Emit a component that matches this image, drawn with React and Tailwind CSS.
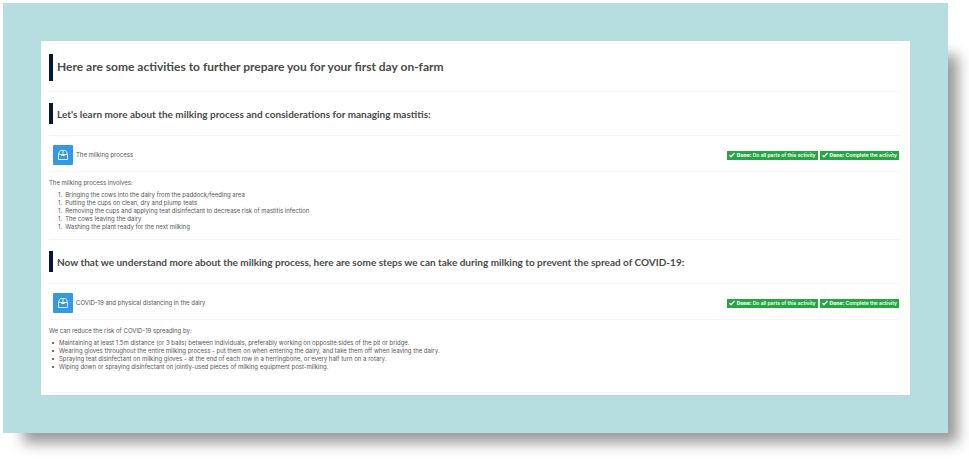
import React from "react";

function PackageIcon() {
  return (
    <span className="flex size-5 shrink-0 items-center justify-center rounded-[1px] bg-[#3498e3]">
      <svg viewBox="0 0 12 10" className="h-[10px] w-[12px]" fill="none" stroke="#d9f1ff" strokeWidth="1" strokeLinejoin="round" aria-hidden="true">
        <path d="M1.500 4.500h9v5h-9zM1.500 4.500 2.500 1.500Q3 .5 4 .5h4q1 0 1.500 1l1 3M6 .5v4M4.500 4.500v1h3v-1" />
      </svg>
    </span>
  );
}

function Badge({ children }) {
  return (
    <span className="flex h-[9px] items-center gap-[2px] bg-[#24a642] px-[2px] text-[5px] leading-[9px] font-semibold whitespace-nowrap text-white">
      <svg viewBox="0 0 12 12" className="size-[6px]" fill="none" stroke="currentColor" strokeWidth="2.5" aria-hidden="true">
        <path d="m1 6.5 3 3L11 2" />
      </svg>
      <span>
        <strong className="font-extrabold">Done:</strong> {children}
      </span>
    </span>
  );
}

function Activity({ title }) {
  return (
    <div className="flex h-9 items-center justify-between border-b border-[#f4f4f4] pt-[2px] pl-1">
      <a href="#" className="flex items-center gap-[3px]">
        <PackageIcon />
        <span>{title}</span>
      </a>
      <div className="flex gap-[2px] pt-[1px]">
        <Badge>Do all parts of this activity</Badge>
        <Badge>Complete the activity</Badge>
      </div>
    </div>
  );
}

function SectionHeading({ children }) {
  return (
    <div className="border-b border-[#f4f4f4] py-[11px]">
      <h2 className="flex h-[21px] items-center border-l-4 border-[#06183a] pl-1 font-['Lato',sans-serif] text-[10px] font-bold text-[#4a4a4a]">
        {children}
      </h2>
    </div>
  );
}

const milkingSteps = [
  "Bringing the cows into the dairy from the paddock/feeding area",
  "Putting the cups on clean, dry and plump teats",
  "Removing the cups and applying teat disinfectant to decrease risk of mastitis infection",
  "The cows leaving the dairy",
  "Washing the plant ready for the next milking",
];

const covidSteps = [
  "Maintaining at least 1.5m distance (or 3 bails) between individuals, preferably working on opposite sides of the pit or bridge.",
  "Wearing gloves throughout the entire milking process - put them on when entering the dairy, and take them off when leaving the dairy.",
  "Spraying teat disinfectant on milking gloves - at the end of each row in a herringbone, or every half turn on a rotary.",
  "Wiping down or spraying disinfectant on jointly-used pieces of milking equipment post-milking.",
];

export default function App() {
  return (
    <div className="min-h-screen overflow-hidden bg-white pt-[3px] pr-[21px] pb-7 pl-[3px] font-['Inter',sans-serif] text-[6px] leading-[8px] text-[#555]">
      <div className="relative isolate">
        <div className="absolute -right-[10px] -bottom-[10px] top-[52px] left-5 -z-10 bg-[#999] blur-[7px]" />
        <main className="bg-[#b6dde0] px-[38px] py-[38px]">
          <div className="bg-white px-2 pt-[2px] pb-[2px]">
            <div className="mr-[3px] border-y border-[#f4f4f4]">
              <div className="border-b border-[#f4f4f4] py-[10px]">
                <h1 className="flex h-[27px] items-center border-l-4 border-[#06183a] pb-[2px] pl-1 font-['Lato',sans-serif] text-[12px] font-bold text-[#4a4a4a]">
                  Here are some activities to further prepare you for your first day on-farm
                </h1>
              </div>

              <section className="border-b border-[#f4f4f4] pb-[8px]">
                <SectionHeading>
                  Let's learn more about the milking process and considerations for managing mastitis:
                </SectionHeading>
                <Activity title="The milking process" />
                <p className="pt-[7px]">The milking process involves:</p>
                <ol className="pt-1 pl-[9px]">
                  {milkingSteps.map((step) => (
                    <li key={step} className="flex gap-[3px]">
                      <span>1.</span>
                      <span>{step}</span>
                    </li>
                  ))}
                </ol>
              </section>

              <section className="pb-[21px]">
                <SectionHeading>
                  Now that we understand more about the milking process, here are some steps we can take during milking to prevent the spread of COVID-19:
                </SectionHeading>
                <Activity title="COVID-19 and physical distancing in the dairy" />
                <p className="pt-[7px]">We can reduce the risk of COVID-19 spreading by:</p>
                <ul className="pt-1 pl-[3px]">
                  {covidSteps.map((step) => (
                    <li key={step} className="flex items-center gap-[5px]">
                      <span className="size-[2px] rounded-full bg-[#444]" />
                      <span>{step}</span>
                    </li>
                  ))}
                </ul>
              </section>
            </div>
          </div>
        </main>
      </div>
    </div>
  );
}
